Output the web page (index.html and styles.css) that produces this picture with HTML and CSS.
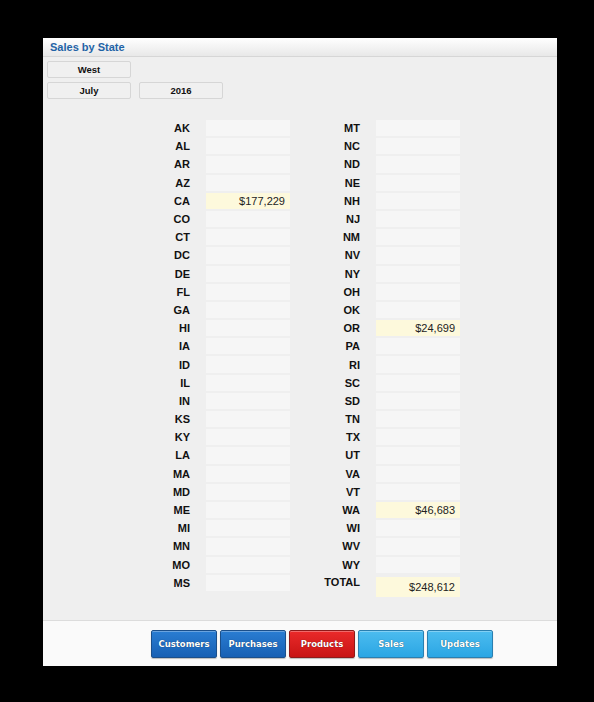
FILE: index.html
```html
<!DOCTYPE html>
<html>
<head>
<meta charset="utf-8">
<link rel="stylesheet" href="styles.css">
</head>
<body>
<div class="panel">
  <div class="header"><span class="title">Sales by State</span></div>
  <div class="content">
    <div class="filters">
      <div class="frow"><div class="fbox">West</div></div>
      <div class="frow"><div class="fbox">July</div><div class="fbox">2016</div></div>
    </div>
    <div class="table">
      <div class="col">
        <div class="lbl">AK</div><div class="val"></div>
        <div class="lbl">AL</div><div class="val"></div>
        <div class="lbl">AR</div><div class="val"></div>
        <div class="lbl">AZ</div><div class="val"></div>
        <div class="lbl">CA</div><div class="val hit">$177,229</div>
        <div class="lbl">CO</div><div class="val"></div>
        <div class="lbl">CT</div><div class="val"></div>
        <div class="lbl">DC</div><div class="val"></div>
        <div class="lbl">DE</div><div class="val"></div>
        <div class="lbl">FL</div><div class="val"></div>
        <div class="lbl">GA</div><div class="val"></div>
        <div class="lbl">HI</div><div class="val"></div>
        <div class="lbl">IA</div><div class="val"></div>
        <div class="lbl">ID</div><div class="val"></div>
        <div class="lbl">IL</div><div class="val"></div>
        <div class="lbl">IN</div><div class="val"></div>
        <div class="lbl">KS</div><div class="val"></div>
        <div class="lbl">KY</div><div class="val"></div>
        <div class="lbl">LA</div><div class="val"></div>
        <div class="lbl">MA</div><div class="val"></div>
        <div class="lbl">MD</div><div class="val"></div>
        <div class="lbl">ME</div><div class="val"></div>
        <div class="lbl">MI</div><div class="val"></div>
        <div class="lbl">MN</div><div class="val"></div>
        <div class="lbl">MO</div><div class="val"></div>
        <div class="lbl">MS</div><div class="val"></div>
      </div>
      <div class="col">
        <div class="lbl">MT</div><div class="val"></div>
        <div class="lbl">NC</div><div class="val"></div>
        <div class="lbl">ND</div><div class="val"></div>
        <div class="lbl">NE</div><div class="val"></div>
        <div class="lbl">NH</div><div class="val"></div>
        <div class="lbl">NJ</div><div class="val"></div>
        <div class="lbl">NM</div><div class="val"></div>
        <div class="lbl">NV</div><div class="val"></div>
        <div class="lbl">NY</div><div class="val"></div>
        <div class="lbl">OH</div><div class="val"></div>
        <div class="lbl">OK</div><div class="val"></div>
        <div class="lbl">OR</div><div class="val hit">$24,699</div>
        <div class="lbl">PA</div><div class="val"></div>
        <div class="lbl">RI</div><div class="val"></div>
        <div class="lbl">SC</div><div class="val"></div>
        <div class="lbl">SD</div><div class="val"></div>
        <div class="lbl">TN</div><div class="val"></div>
        <div class="lbl">TX</div><div class="val"></div>
        <div class="lbl">UT</div><div class="val"></div>
        <div class="lbl">VA</div><div class="val"></div>
        <div class="lbl">VT</div><div class="val"></div>
        <div class="lbl">WA</div><div class="val hit">$46,683</div>
        <div class="lbl">WI</div><div class="val"></div>
        <div class="lbl">WV</div><div class="val"></div>
        <div class="lbl">WY</div><div class="val"></div>
        <div class="lbl total-lbl">TOTAL</div><div class="val hit total">$248,612</div>
      </div>
    </div>
  </div>
  <div class="footer">
    <div class="btn dark">Customers</div>
    <div class="btn dark">Purchases</div>
    <div class="btn red">Products</div>
    <div class="btn light">Sales</div>
    <div class="btn light">Updates</div>
  </div>
</div>
</body>
</html>
```

FILE: styles.css
```css
html, body {
  margin: 0;
  padding: 0;
  background: #000;
}
body {
  padding: 38px 37px 0 43px;
  font-family: "Liberation Sans", Arial, sans-serif;
}
.panel {
  width: 514px;
  height: 628px;
  background: #efefef;
  display: flex;
  flex-direction: column;
}
.header {
  height: 18px;
  background: linear-gradient(#ffffff, #e8e8e8);
  border-bottom: 1px solid #d6d6d6;
  display: flex;
  align-items: center;
  padding-left: 7px;
}
.title {
  color: #1f63a6;
  font-weight: bold;
  font-size: 11px;
}
.content {
  flex: 1;
  padding: 4px 0 0 4px;
}
.filters {
  display: flex;
  flex-direction: column;
  gap: 4px;
}
.frow {
  display: flex;
  gap: 8px;
}
.fbox {
  width: 82px;
  height: 15px;
  border: 1px solid #d6d6d6;
  border-radius: 2px;
  background: #f0f0f0;
  font-size: 9.5px;
  font-weight: bold;
  color: #111;
  display: flex;
  align-items: center;
  justify-content: center;
}
.table {
  display: flex;
  gap: 10px;
  margin-left: 83px;
  margin-top: 21px;
}
.col {
  display: grid;
  grid-template-columns: 60px 84px;
  column-gap: 16px;
  row-gap: 2px;
  grid-auto-rows: 16.2px;
  align-content: start;
}
.lbl {
  font-size: 11px;
  font-weight: bold;
  color: #111;
  text-align: right;
  display: flex;
  align-items: center;
  justify-content: flex-end;
}
.val {
  background: #f6f6f6;
  font-size: 11px;
  color: #222;
  display: flex;
  align-items: center;
  justify-content: flex-end;
  padding-right: 5px;
}
.val.hit {
  background: #fdf9dc;
}
.total-lbl {
  align-items: flex-start;
  margin-top: 1px;
}
.val.total {
  height: 20px;
  margin-top: 2px;
  padding-top: 1px;
  box-sizing: border-box;
}
.footer {
  height: 45px;
  background: #fafafa;
  border-top: 1px solid #dcdcdc;
  display: flex;
  align-items: center;
  gap: 3px;
  padding-left: 108px;
}
.btn {
  width: 64px;
  height: 26px;
  border: 1px solid #555;
  border-radius: 2px;
  color: #fff;
  font-family: "DejaVu Sans", Verdana, sans-serif;
  font-weight: bold;
  font-size: 8.5px;
  display: flex;
  align-items: center;
  justify-content: center;
  text-shadow: 0 0 1px rgba(0,0,0,0.6);
  box-shadow: inset 0 1px 0 rgba(255,255,255,0.3), 0 1px 1px rgba(0,0,0,0.25);
}
.btn.dark {
  background: linear-gradient(#2a7dd2, #1760b4);
  border-color: #1b4f8a;
}
.btn.red {
  background: linear-gradient(#ea2a2a, #c81414);
  border-color: #8e1a1a;
}
.btn.light {
  background: linear-gradient(#4cbcef, #2ba6e4);
  border-color: #2a7fb0;
}
```
